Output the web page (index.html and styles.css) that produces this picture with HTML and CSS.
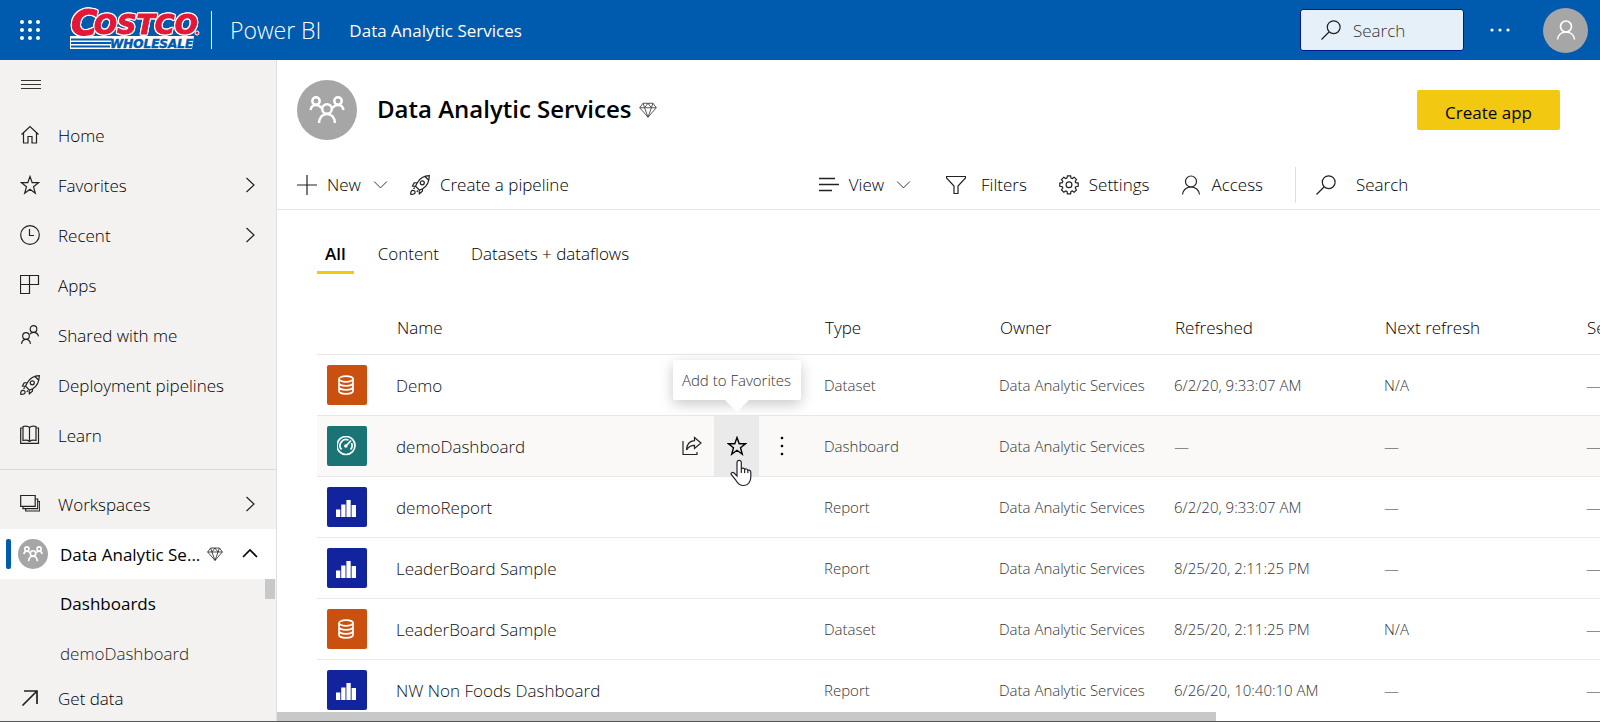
FILE: index.html
```html
<!DOCTYPE html>
<html lang="en">
<head>
<meta charset="utf-8">
<title>Data Analytic Services - Power BI</title>
<link rel="stylesheet" href="styles.css">
</head>
<body>
<svg class="sprite" aria-hidden="true">
  <symbol id="i-home" viewBox="0 0 20 20"><path d="M1.500 9.500 10 1.500l8.500 8M3.500 8v10h4.500v-6.500h4V18h4.500V8"/></symbol>
  <symbol id="i-star" viewBox="0 0 20 20"><path d="M10 1.500l2.200 6.200h6.300l-5 4 1.800 6.500L10 14.300l-5.300 3.900 1.800-6.500-5-4h6.300z"/></symbol>
  <symbol id="i-clock" viewBox="0 0 20 20"><circle cx="10" cy="10" r="9.300"/><path d="M9.500 4v6.500h4.500"/></symbol>
  <symbol id="i-apps" viewBox="0 0 20 20"><path d="M.5.500h18v9h-18zM.5 9.500h9v9h-9zM9.500.500v9"/></symbol>
  <symbol id="i-shared" viewBox="0 0 20 20"><circle cx="13.500" cy="4" r="3.300"/><circle cx="6" cy="11" r="3.300"/><path d="M10 9.300c.8-1.300 2-2 3.500-2 2.500 0 4.500 1.600 5 4M1.500 18.800c.4-2.600 2.200-4.500 4.500-4.500s4.100 1.900 4.500 4.500"/></symbol>
  <symbol id="i-rocket" viewBox="0 0 20 20"><path d="M19.300.7c-5 .1-9.200 2.300-12 7l-1.800 3.500 4 4 3.500-1.700C17 11 19.200 6 19.300.700zM7.500 7.500l-3.300.3L2.500 11l3 .3M12.700 13.200l-.3 3-3 2.500-.3-3M15 1.500l3.500 3.500"/><circle cx="12.300" cy="7.800" r="2"/><path d="M4.800 12.500l-1.300 1.300M8 15.500l-1.300 1.300M.8 19.300c-.3-2.300.5-4 2-4s2.400.8 2.300 2.200c-.1 1.300-1.800 2-4.300 1.800z"/></symbol>
  <symbol id="i-book" viewBox="0 0 20 20"><path d="M9.500 2.500v14M9.500 2.500C8 1 5.500.800 3 1.500v14c2.500-.6 5-.2 6.500 1M9.500 2.500C11 1 13.500.800 16 1.500v14c-2.500-.6-5-.2-6.500 1M3 3H.7v15.300h17.800V3H16"/></symbol>
  <symbol id="i-stack" viewBox="0 0 20 20"><path d="M.7 1.500h14.500v10.800H.7zM3 12.500v2.200h14.700V5H15.500M5.700 15v2h14V7.500h-2"/></symbol>
  <symbol id="i-right" viewBox="0 0 20 20"><path d="M6.500 3l7.500 7-7.500 7"/></symbol>
  <symbol id="i-down" viewBox="0 0 20 20"><path d="M1.500 6l8.500 8.500L18.500 6"/></symbol>
  <symbol id="i-up" viewBox="0 0 20 20"><path d="M3 13l7-7 7 7"/></symbol>
  <symbol id="i-arrow" viewBox="0 0 20 20"><path d="M2.500 17.500l14-14M4 3h13v13"/></symbol>
  <symbol id="i-diamond" viewBox="0 0 20 20"><path d="M4.500 2.500h11l3.700 5L10 18 .8 7.500zM.8 7.500h18.400M4.500 2.500l1.700 5L10 18l3.800-10.500 1.700-5M6.200 7.500l3.800-5 3.800 5"/></symbol>
  <symbol id="i-group" viewBox="0 0 36 28"><circle cx="18" cy="13" r="4.800"/><path d="M10 27c.5-5.500 3.500-9 8-9s7.500 3.500 8 9"/><circle cx="7" cy="5" r="3.700"/><circle cx="29" cy="5" r="3.700"/><path d="M1.500 14c.5-3 2.300-5 5.500-5 2.300 0 4.300 1.200 5.500 3M34.500 14c-.5-3-2.300-5-5.500-5-2.300 0-4.300 1.200-5.500 3"/></symbol>
  <symbol id="i-plus" viewBox="0 0 20 20"><path d="M10 0v20M0 10h20"/></symbol>
  <symbol id="i-lines" viewBox="0 0 20 20"><path d="M0 3.500h16M0 9.500h20M0 15.500h13" stroke-width="1.700"/></symbol>
  <symbol id="i-filter" viewBox="0 0 20 20"><path d="M.5 1.500h19v1.500L12 11v7.500H8V11L.5 3z"/></symbol>
  <symbol id="i-gear" viewBox="0 0 20 20"><path d="M8.400.8h3.200l.4 2.200 1.300.5 1.900-1.300 2.300 2.300-1.300 1.900.5 1.300 2.500.4v3.200l-2.500.4-.5 1.300 1.300 1.900-2.300 2.300-1.900-1.300-1.300.5-.4 2.500H8.400L8 16.400l-1.300-.5-1.900 1.300-2.300-2.300 1.300-1.900-.5-1.300-2.500-.4V8.100l2.500-.4.500-1.300-1.300-1.900 2.300-2.300 1.900 1.300L8 3z"/><circle cx="10" cy="9.700" r="2.900"/></symbol>
  <symbol id="i-person" viewBox="0 0 20 20"><circle cx="10" cy="6.500" r="5.500"/><path d="M1.500 19.500C2 15 5.500 12 10 12s8 3 8.500 7.500"/></symbol>
  <symbol id="i-search" viewBox="0 0 20 20"><circle cx="12.700" cy="7.200" r="6.400"/><path d="M8 12L.5 19.500"/></symbol>
  <symbol id="i-share" viewBox="0 0 20 20"><path d="M1 5v13.500h14V16M12.500 1.500 19 7l-6.500 5.500V9.300C9 9.300 6.500 10.500 4.500 14c.3-5.500 3-9 8-9.300z"/></symbol>
  <symbol id="i-data" viewBox="0 0 20 20"><ellipse cx="9" cy="4" rx="7" ry="2.800"/><path d="M2 4v12c0 1.500 3 2.800 7 2.800s7-1.300 7-2.800V4M2 8c0 1.500 3 2.800 7 2.800S16 9.500 16 8M2 12c0 1.500 3 2.800 7 2.800s7-1.300 7-2.800"/></symbol>
  <symbol id="i-gauge" viewBox="0 0 20 20"><circle cx="9" cy="9.500" r="9"/><path d="M4.500 13.500A6 6 0 0 1 11.500 4.100M14.500 7a6 6 0 0 1-1 6.500M9 10l5-5.500"/><circle class="solid" cx="8.800" cy="10" r="1.700"/></symbol>
  <symbol id="i-bars" viewBox="0 0 20 20" overflow="visible"><path class="solid" d="M-1 12.500h4.300V20H-1zM4.200 7.500h4.300V20H4.200zM9.400 3h4.300v17H9.400zM14.600 8H19v12h-4.400z"/></symbol>
</svg>

<div class="app">
  <header class="topbar">
    <button class="waffle" aria-label="App launcher">
      <svg viewBox="0 0 20 20"><g fill="#fff"><circle cx="2" cy="2" r="2"/><circle cx="10" cy="2" r="2"/><circle cx="18" cy="2" r="2"/><circle cx="2" cy="10" r="2"/><circle cx="10" cy="10" r="2"/><circle cx="18" cy="10" r="2"/><circle cx="2" cy="18" r="2"/><circle cx="10" cy="18" r="2"/><circle cx="18" cy="18" r="2"/></g></svg>
    </button>
    <svg class="logo" viewBox="0 0 130 40" role="img" aria-label="Costco Wholesale">
      <path d="M0 26h124l-2 13H0z" fill="#fff"/>
      <path d="M1 29.500h41M1 33h40M1 36.500h39" stroke="#005aad" stroke-width="2"/>
      <text class="logo-sub" x="40" y="38">WHOLESALE</text>
      <g class="logo-main"><text class="logo-c" x="1" y="25">C</text><text x="24" y="24">OSTCO</text></g>
      <circle cx="127" cy="23" r="2" fill="#e31837" stroke="#fff"/>
    </svg>
    <a class="product" href="#">Power BI</a>
    <a class="crumb" href="#">Data Analytic Services</a>
    <label class="top-search"><svg class="icon"><use href="#i-search"/></svg><input type="text" placeholder="Search" aria-label="Search Power BI"></label>
    <button class="more" aria-label="More options"><svg viewBox="0 0 20 4"><g fill="#fff"><circle cx="2" cy="2" r="1.600"/><circle cx="10" cy="2" r="1.600"/><circle cx="18" cy="2" r="1.600"/></g></svg></button>
    <button class="user" aria-label="Account"><svg class="icon"><use href="#i-person"/></svg></button>
  </header>

  <div class="body">
    <nav class="sidebar">
      <button class="burger" aria-label="Toggle navigation"><svg viewBox="0 0 20 10"><path d="M0 .5h20M0 4.500h20M0 8.500h20" stroke="#333"/></svg></button>
      <a class="nav-item" href="#"><svg class="icon"><use href="#i-home"/></svg><span>Home</span></a>
      <a class="nav-item" href="#"><svg class="icon"><use href="#i-star"/></svg><span>Favorites</span><svg class="icon end"><use href="#i-right"/></svg></a>
      <a class="nav-item" href="#"><svg class="icon"><use href="#i-clock"/></svg><span>Recent</span><svg class="icon end"><use href="#i-right"/></svg></a>
      <a class="nav-item" href="#"><svg class="icon"><use href="#i-apps"/></svg><span>Apps</span></a>
      <a class="nav-item" href="#"><svg class="icon"><use href="#i-shared"/></svg><span>Shared with me</span></a>
      <a class="nav-item" href="#"><svg class="icon"><use href="#i-rocket"/></svg><span>Deployment pipelines</span></a>
      <a class="nav-item" href="#"><svg class="icon"><use href="#i-book"/></svg><span>Learn</span></a>
      <hr class="rule">
      <a class="nav-item" href="#"><svg class="icon"><use href="#i-stack"/></svg><span>Workspaces</span><svg class="icon end"><use href="#i-right"/></svg></a>
      <a class="nav-item current" href="#"><span class="badge"><svg class="icon"><use href="#i-group"/></svg></span><span class="clip">Data Analytic Se...</span><svg class="icon gem"><use href="#i-diamond"/></svg><svg class="icon end"><use href="#i-up"/></svg></a>
      <div class="tree">
        <h2 class="tree-title">Dashboards</h2>
        <a class="tree-item" href="#">demoDashboard</a>
        <span class="tree-thumb"></span>
      </div>
      <a class="nav-item get-data" href="#"><svg class="icon"><use href="#i-arrow"/></svg><span>Get data</span></a>
    </nav>

    <main class="main">
      <div class="heading">
        <span class="avatar"><svg class="icon"><use href="#i-group"/></svg></span>
        <h1>Data Analytic Services</h1>
        <svg class="icon gem"><use href="#i-diamond"/></svg>
        <button class="create">Create app</button>
      </div>

      <div class="toolbar">
        <button class="tool"><svg class="icon"><use href="#i-plus"/></svg>New<svg class="icon small"><use href="#i-down"/></svg></button>
        <button class="tool"><svg class="icon"><use href="#i-rocket"/></svg>Create a pipeline</button>
        <div class="tools-right">
          <button class="tool view"><svg class="icon"><use href="#i-lines"/></svg>View<svg class="icon small"><use href="#i-down"/></svg></button>
          <button class="tool wide"><svg class="icon"><use href="#i-filter"/></svg>Filters</button>
          <button class="tool"><svg class="icon"><use href="#i-gear"/></svg>Settings</button>
          <button class="tool"><svg class="icon"><use href="#i-person"/></svg>Access</button>
          <label class="tool-search"><svg class="icon"><use href="#i-search"/></svg><input type="text" placeholder="Search" aria-label="Search workspace"></label>
        </div>
      </div>

      <div class="tabs" role="tablist">
        <button class="tab active" role="tab" aria-selected="true">All</button>
        <button class="tab" role="tab" aria-selected="false">Content</button>
        <button class="tab" role="tab" aria-selected="false">Datasets + dataflows</button>
      </div>

      <div class="list">
        <table>
          <colgroup><col class="c-icon"><col class="c-name"><col class="c-type"><col class="c-owner"><col class="c-refreshed"><col class="c-next"><col></colgroup>
          <thead><tr><th></th><th>Name</th><th>Type</th><th>Owner</th><th>Refreshed</th><th>Next refresh</th><th>Sensitivity</th></tr></thead>
          <tbody>
            <tr><td><span class="tile dataset"><svg class="icon"><use href="#i-data"/></svg></span></td><td><a href="#">Demo</a></td><td>Dataset</td><td>Data Analytic Services</td><td>6/2/20, 9:33:07 AM</td><td>N/A</td><td>—</td></tr>
            <tr class="hover"><td><span class="tile dashboard"><svg class="icon"><use href="#i-gauge"/></svg></span></td><td><div class="name-cell"><a href="#">demoDashboard</a><div class="actions">
              <button aria-label="Share"><svg class="icon"><use href="#i-share"/></svg></button>
              <button class="hot" aria-label="Add to Favorites"><svg class="icon"><use href="#i-star"/></svg><span class="tip">Add to Favorites</span><svg class="pointer" viewBox="0 0 22 28"><path d="M7 14V3.200a2.200 2.200 0 0 1 4.300 0V10c.5-1.300 3-1.200 3.300.5.800-1 3-.6 3.200 1 1-.6 3-.2 3 1.700V18c0 4-2.200 8.500-7.300 8.500-4 0-6-2.300-7.700-5.300L1.200 15.500c-.7-1.500 1.300-2.700 2.600-1.700L7 17zM11.300 10v4M14.600 10.800V14M17.800 11.800V14"/></svg></button>
              <button aria-label="More"><svg class="dots" viewBox="0 0 4 20"><circle cx="2" cy="2" r="1.300"/><circle cx="2" cy="10" r="1.300"/><circle cx="2" cy="18" r="1.300"/></svg></button>
            </div></div></td><td>Dashboard</td><td>Data Analytic Services</td><td>—</td><td>—</td><td>—</td></tr>
            <tr><td><span class="tile report"><svg class="icon"><use href="#i-bars"/></svg></span></td><td><a href="#">demoReport</a></td><td>Report</td><td>Data Analytic Services</td><td>6/2/20, 9:33:07 AM</td><td>—</td><td>—</td></tr>
            <tr><td><span class="tile report"><svg class="icon"><use href="#i-bars"/></svg></span></td><td><a href="#">LeaderBoard Sample</a></td><td>Report</td><td>Data Analytic Services</td><td>8/25/20, 2:11:25 PM</td><td>—</td><td>—</td></tr>
            <tr><td><span class="tile dataset"><svg class="icon"><use href="#i-data"/></svg></span></td><td><a href="#">LeaderBoard Sample</a></td><td>Dataset</td><td>Data Analytic Services</td><td>8/25/20, 2:11:25 PM</td><td>N/A</td><td>—</td></tr>
            <tr><td><span class="tile report"><svg class="icon"><use href="#i-bars"/></svg></span></td><td><a href="#">NW Non Foods Dashboard</a></td><td>Report</td><td>Data Analytic Services</td><td>6/26/20, 10:40:10 AM</td><td>—</td><td>—</td></tr>
          </tbody>
        </table>
      </div>
      <div class="scroll-track"><div class="scroll-thumb"></div></div>
    </main>
  </div>
</div>
</body>
</html>
```
FILE: styles.css
```css
* { box-sizing: border-box; }

body {
  margin: 0;
  font-family: "Open Sans", "Noto Sans", sans-serif;
  font-size: 17px;
  font-weight: 300;
  color: #000;
  background: #fff;
}

a { color: inherit; text-decoration: none; }

button, input {
  font: inherit;
  color: inherit;
  background: none;
  border: 0;
  padding: 0;
  outline: 0;
}

.sprite { display: none; }

.icon {
  flex: none;
  width: 20px;
  height: 20px;
  overflow: visible;
  fill: none;
  stroke: #222;
  stroke-width: 1.2;
}

.solid { fill: currentColor; stroke: none; }

.app {
  display: flex;
  flex-direction: column;
  height: 100vh;
  border-bottom: 1px solid #555;
  overflow: hidden;
}

/* Top bar */
.topbar {
  flex: none;
  display: flex;
  align-items: center;
  height: 60px;
  padding: 0 12px 0 20px;
  background: #005aad;
  color: #fff;
}

.waffle, .waffle svg { display: block; width: 20px; height: 20px; }

.logo {
  width: 130px;
  height: 40px;
  margin-left: 30px;
  overflow: visible;
  font: italic bold 27px "DejaVu Sans", sans-serif;
}
.logo-main {
  fill: #e31837;
  stroke: #e31837;
  stroke-width: 1;
  filter: drop-shadow(1px 0 #fff) drop-shadow(-1px 0 #fff) drop-shadow(0 1px #fff) drop-shadow(0 -1px #fff);
}
.logo-c { font-size: 36px; }
.logo-sub { font-size: 12px; fill: #005aad; stroke: #005aad; stroke-width: 0.5; }

.product {
  margin-left: 11px;
  padding-left: 18px;
  border-left: 1px solid #fff;
  font-size: 23px;
  line-height: 38px;
}

.crumb { margin-left: 28px; font-weight: 400; }

.top-search {
  display: flex;
  align-items: center;
  gap: 12px;
  width: 164px;
  height: 42px;
  margin-left: auto;
  padding: 0 20px;
  border: 1px solid #00188f;
  border-radius: 3px;
  background: #e6f0f8;
  color: #252423;
}
.top-search input { width: 80px; }
.top-search input::placeholder { color: #333; opacity: 1; }

.more { width: 20px; margin: 0 33px 0 26px; }
.more svg { display: block; width: 20px; height: 4px; }

.user {
  display: grid;
  place-items: center;
  width: 45px;
  height: 45px;
  border-radius: 50%;
  background: #a6a6a6;
}
.user .icon { stroke: #fff; stroke-width: 1.7; }

/* Layout */
.body { flex: 1; display: flex; min-height: 0; }

.sidebar {
  flex: none;
  display: flex;
  flex-direction: column;
  width: 277px;
  border-right: 1px solid #e1dfdd;
  background: #f3f2f1;
  overflow: hidden;
}

.burger { flex: none; width: 62px; height: 50px; padding-left: 21px; }
.burger svg { display: block; width: 20px; height: 10px; }

.nav-item {
  flex: none;
  display: flex;
  align-items: center;
  gap: 18px;
  height: 50px;
  padding: 0 16px 0 20px;
}
.nav-item .end { margin-left: auto; }

.rule {
  flex: none;
  width: 100%;
  height: 1px;
  margin: 9px 0;
  border: 0;
  background: #dddbd9;
}

.nav-item.current {
  gap: 0;
  padding-left: 6px;
  background: #fff;
  font-weight: 400;
}
.current::before {
  content: "";
  width: 5px;
  height: 30px;
  border-radius: 2px;
  background: #005aad;
}
.current .end { stroke: #000; stroke-width: 1.6; }
.badge, .avatar {
  flex: none;
  display: grid;
  place-items: center;
  border-radius: 50%;
  background: #a6a6a6;
}
.badge { width: 30px; height: 30px; margin: 0 12px 0 7px; }
.badge .icon { height: 16px; stroke: #fff; stroke-width: 3; }
.clip { width: 146px; white-space: nowrap; }
.current .gem { width: 16px; height: 16px; margin-left: 1px; stroke-width: 1; }

.tree { position: relative; flex: none; height: 94px; overflow: hidden; }
.tree-title, .tree-item {
  display: block;
  margin: 0;
  padding-left: 60px;
  font-size: 17px;
  line-height: 50px;
}
.tree-title { font-weight: 400; }
.tree-item { color: #222; }
.tree-thumb {
  position: absolute;
  top: 0;
  right: 1px;
  width: 10px;
  height: 20px;
  background: #c8c8c8;
}
.get-data .icon { stroke-width: 1.7; }

/* Workspace */
.main { flex: 1; display: flex; flex-direction: column; min-width: 0; }

.heading {
  flex: none;
  display: flex;
  align-items: center;
  height: 100px;
  padding: 0 40px 0 20px;
}
.avatar { width: 60px; height: 60px; }
.avatar .icon { width: 36px; height: 28px; stroke: #fff; stroke-width: 2.5; }
h1 { margin: 0 0 4px 20px; font-size: 24px; font-weight: 600; }
.heading .gem { width: 18px; height: 18px; margin-left: 8px; stroke: #444; stroke-width: 1; }
.create {
  width: 143px;
  height: 40px;
  margin-left: auto;
  padding-top: 5px;
  border-radius: 2px;
  background: #f2c811;
  font-weight: 400;
}

.toolbar {
  flex: none;
  display: flex;
  align-items: center;
  gap: 22px;
  height: 50px;
  padding-left: 20px;
  border-bottom: 1px solid #e6e6e6;
}
.tool { display: flex; align-items: center; gap: 10px; white-space: nowrap; }
.tool.wide { gap: 15px; }
.tool.view { margin-right: 3px; }
.tool .small { width: 15px; height: 15px; margin-left: 2px; }
.tools-right {
  display: flex;
  align-items: center;
  gap: 32px;
  margin-left: auto;
  padding-right: 54px;
}
.tool-search {
  display: flex;
  align-items: center;
  gap: 20px;
  height: 36px;
  padding-left: 20px;
  border-left: 1px solid #e1dfdd;
}
.tool-search input { width: 190px; }
.tool-search input::placeholder { color: #000; opacity: 1; }

.tabs { flex: none; display: flex; gap: 16px; padding: 22px 40px 0; }
.tab {
  height: 42px;
  padding: 3px 8px 0;
  border-bottom: 3px solid transparent;
}
.tab.active { border-color: #f2c811; font-weight: 600; }

/* Content list */
.list { flex: 1; min-height: 0; padding-left: 40px; overflow: hidden; }
table {
  width: 1822px;
  margin-top: 20px;
  border-collapse: separate;
  border-spacing: 0;
  table-layout: fixed;
  font-size: 15px;
  color: #333;
}
.c-icon { width: 79px; }
.c-name { width: 428px; }
.c-type, .c-owner { width: 175px; }
.c-refreshed { width: 210px; }
.c-next { width: 202px; }
th, td {
  height: 61px;
  padding: 0;
  border-bottom: 1px solid #e8e8e8;
  text-align: left;
  white-space: nowrap;
}
th { padding: 7px 0 0 1px; font-size: 17px; font-weight: 300; color: #000; }
td a { font-size: 17px; color: #111; }
.hover td { background: #faf9f8; }

.tile {
  display: grid;
  place-items: center;
  width: 40px;
  height: 40px;
  margin-left: 10px;
  border-radius: 2px;
  color: #fff;
}
.tile .icon { stroke: #fff; stroke-width: 1.7; }
.dataset { background: #ca5010; }
.dashboard { background: #1a7476; }
.report { background: #12239e; }

.name-cell { display: flex; align-items: center; justify-content: space-between; padding-right: 20px; }
.actions { display: flex; }
.actions button {
  position: relative;
  display: grid;
  place-items: center;
  width: 45px;
  height: 60px;
}
.actions .hot { background: #eaeaea; }
.hot .icon { stroke: #000; stroke-width: 1.4; }
.dots { width: 4px; height: 20px; }
.tip {
  position: absolute;
  bottom: 76px;
  left: 50%;
  width: 128px;
  margin-left: -64px;
  border-radius: 2px;
  background: #fff;
  box-shadow: 0 4px 14px rgba(0, 0, 0, .22);
  color: #333;
  font-size: 15px;
  line-height: 40px;
}
.tip::after {
  content: "";
  position: absolute;
  top: 100%;
  left: 52px;
  border: 12px solid transparent;
  border-top-color: #fff;
  border-bottom: 0;
}
.pointer {
  position: absolute;
  top: 43px;
  left: 16px;
  z-index: 1;
  width: 22px;
  height: 28px;
  fill: #fff;
  stroke: #223;
  stroke-width: 1.2;
}

.scroll-track { flex: none; height: 9px; }
.scroll-thumb { width: 71%; height: 9px; background: #c8c8c8; }
```
